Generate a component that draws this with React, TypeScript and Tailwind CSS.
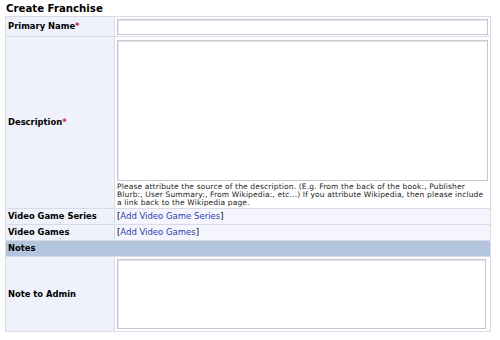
import React from "react";

export default function App() {
  const label = "w-[109px] shrink-0 bg-[#eff1fb] border-r border-[#d9dce8] pl-[2px] flex items-center text-[8.4px] font-bold text-black";
  return (
    <div className="w-[500px] h-[340px] bg-white overflow-hidden font-['DejaVu_Sans',Verdana,sans-serif] text-black">
      <div className="pl-[6px] pt-[3px] h-[16px] text-[10.2px] leading-[12px] font-bold">Create Franchise</div>
      <div className="ml-[5px] w-[486px] border border-[#d9dce8]">
        <div className="flex h-[20px] border-b border-[#d9dce8]">
          <div className={label}>
            Primary Name<span className="text-[#d0202a]">*</span>
          </div>
          <div className="flex-1 flex items-center pl-[2px] pr-[2px] bg-white">
            <div className="w-full h-[16px] border border-[#c5c7d0] shadow-[inset_1px_1px_0_#e6e6ea]"></div>
          </div>
        </div>
        <div className="flex h-[172px] border-b border-[#d9dce8]">
          <div className={label}>
            Description<span className="text-[#d0202a]">*</span>
          </div>
          <div className="flex-1 flex flex-col pl-[2px] pr-[2px] pt-[3px] bg-white">
            <div className="w-full h-[141px] border border-[#c5c7d0] shadow-[inset_1px_1px_0_#e6e6ea]"></div>
            <div className="mt-[2px] text-[7.5px] leading-[8px] tracking-[0.15px] text-[#222]">
              Please attribute the source of the description. (E.g. From the back of the book:, Publisher Blurb:, User Summary:, From Wikipedia:, etc...) If you attribute Wikipedia, then please include a link back to the Wikipedia page.
            </div>
          </div>
        </div>
        <div className="flex h-[16px] border-b border-[#d9dce8]">
          <div className={label}>Video Game Series</div>
          <div className="flex-1 flex items-center pl-[2px] bg-[#f5f6fd] text-[8.5px]">
            [<span className="text-[#2a3bb0]">Add Video Game Series</span>]
          </div>
        </div>
        <div className="flex h-[16px] border-b border-[#d9dce8]">
          <div className={label}>Video Games</div>
          <div className="flex-1 flex items-center pl-[2px] bg-[#f5f6fd] text-[8.5px]">
            [<span className="text-[#2a3bb0]">Add Video Games</span>]
          </div>
        </div>
        <div className="flex items-center h-[16px] bg-[#b3c4dd] pl-[2px] text-[8.4px] font-bold border-b border-[#d9dce8]">
          Notes
        </div>
        <div className="flex h-[74px]">
          <div className={label}>Note to Admin</div>
          <div className="flex-1 flex items-center pl-[2px] pr-[4px] bg-white">
            <div className="w-full h-[70px] border border-[#c5c7d0] shadow-[inset_1px_1px_0_#e6e6ea]"></div>
          </div>
        </div>
      </div>
    </div>
  );
}
